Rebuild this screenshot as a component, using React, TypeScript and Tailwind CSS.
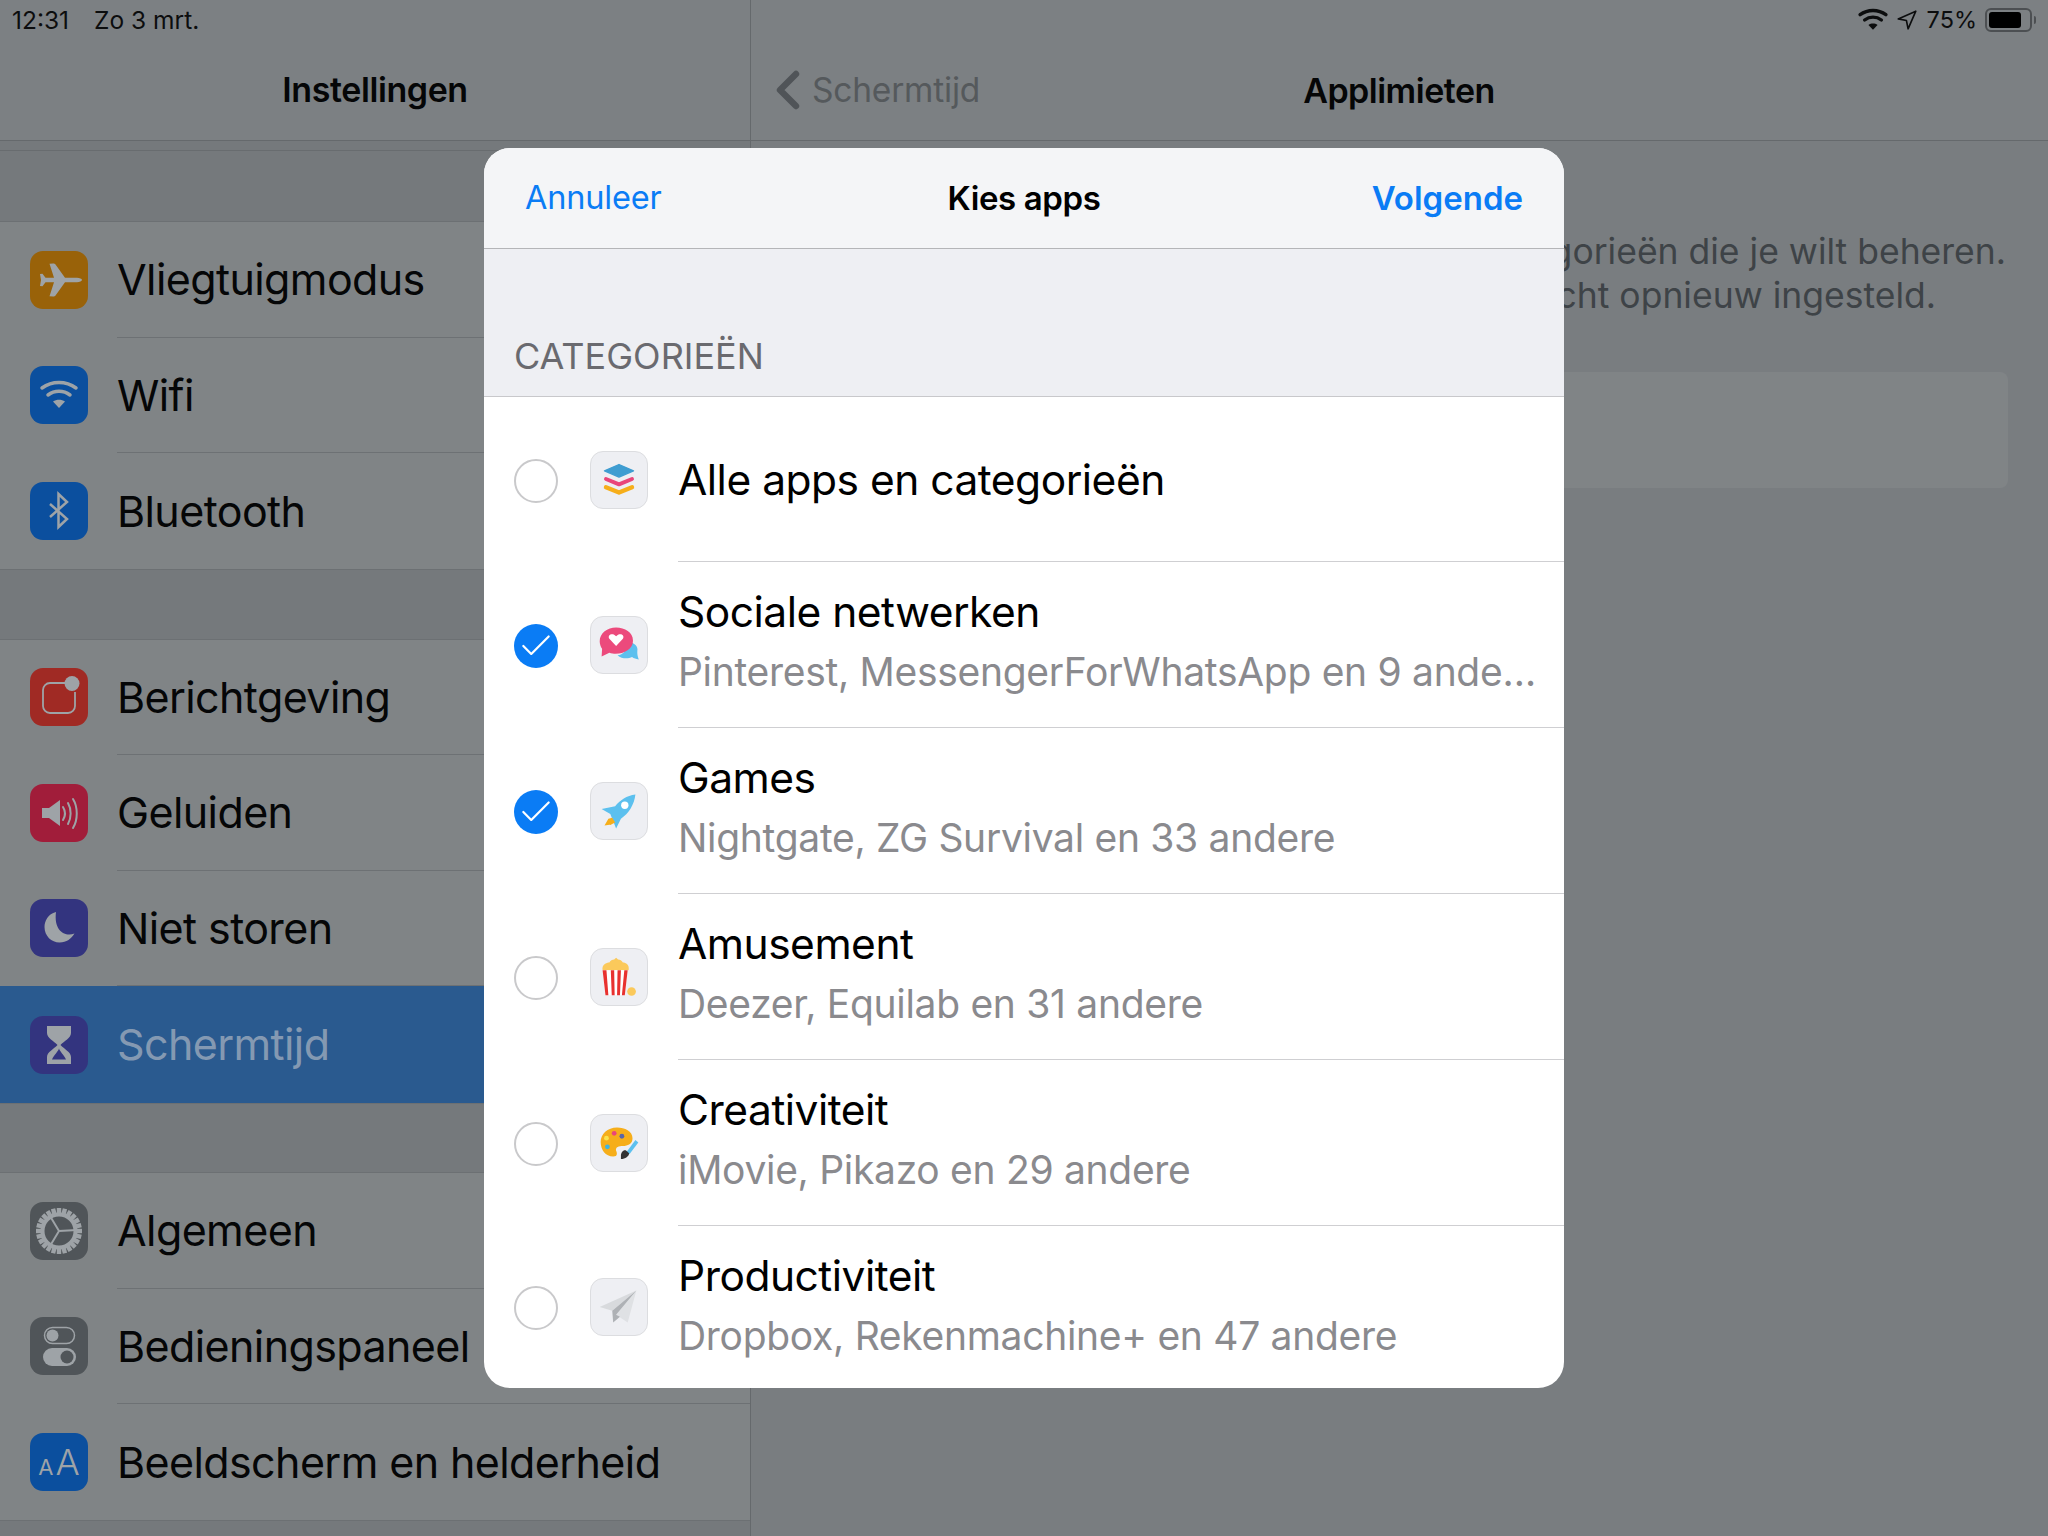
import type { ReactNode } from "react";
import { Check, ChevronLeft } from "lucide-react";

const dim = "#9ea3a7";

function Plane() {
  return (
    <svg viewBox="0 0 58 58" className="size-[58px]">
      <path
        fill={dim}
        d="M47 26.800c2.500 0 5 1 5 2.200s-2.500 2.200-5 2.200H35L25.500 44.500c-.5.700-1.300 1-2.500 1l-3.500-.2 4.500-14.100H15.500l-3 4-2.500-.2 1-6-1-6 2.500-.2 3 4H24L19.500 12.700l3.500-.2c1.200 0 2 .3 2.500 1L35 26.800z"
      />
    </svg>
  );
}

function Wifi({ color = dim, size = 58, weight = 3.5 }: { color?: string; size?: number; weight?: number }) {
  return (
    <svg viewBox="0 0 58 58" width={size} height={size}>
      <path d="M12 22c10-7.500 24-7.500 34 0" fill="none" stroke={color} strokeWidth={weight} strokeLinecap="round" />
      <path d="M18 29c6.500-5 15.500-5 22 0" fill="none" stroke={color} strokeWidth={weight} strokeLinecap="round" />
      <path d="M23 35.500c3.500-2.500 8.500-2.500 12 0L29 42z" fill={color} />
    </svg>
  );
}

function Bluetooth() {
  return (
    <svg viewBox="0 0 58 58" className="size-[58px]">
      <path d="M20 22l17 15-8.500 8V12l8.500 8-17 15" fill="none" stroke={dim} strokeWidth="2.500" />
    </svg>
  );
}

function Notifications() {
  return (
    <svg viewBox="0 0 58 58" className="size-[58px]">
      <path d="M36 15H20a7 7 0 0 0-7 7v16a7 7 0 0 0 7 7h18a7 7 0 0 0 7-7V24" fill="none" stroke={dim} strokeWidth="1.800" />
      <circle cx="42" cy="15.500" r="7.500" fill={dim} />
    </svg>
  );
}

function Sounds() {
  return (
    <svg viewBox="0 0 58 58" className="size-[58px]">
      <path d="M12 24h7l11-8v26l-11-8h-7z" fill={dim} />
      <path d="M33 23c2.500 4 2.500 9 0 13" fill="none" stroke={dim} strokeWidth="2" strokeLinecap="round" />
      <path d="M38 19c3.500 6 3.500 15 0 21" fill="none" stroke={dim} strokeWidth="2" strokeLinecap="round" />
      <path d="M43 15c5 8 5 21 0 29" fill="none" stroke={dim} strokeWidth="2" strokeLinecap="round" />
    </svg>
  );
}

function Moon() {
  return (
    <svg viewBox="0 0 58 58" className="size-[58px]">
      <path d="M26 13c-8 2-11.500 9-11.500 15 0 9 7 15.500 15 15.500 7 0 12-4 15-9-9 3.500-21-2-18.500-21.500z" fill={dim} />
    </svg>
  );
}

function Hourglass() {
  return (
    <svg viewBox="0 0 58 58" className="size-[58px]">
      <path
        fill={dim}
        fillRule="evenodd"
        d="M17 10h24v7c0 5-7 8-10.500 12C34 33 41 36 41 41v7H17v-7c0-5 7-8 10.500-12C24 25 17 22 17 17zm12 22.500c-.8 3-5 6.500-7 11h14c-2-4.500-6.200-8-7-11z"
      />
    </svg>
  );
}

function Gear() {
  const teeth = Array.from({ length: 24 }, (_, i) => i * 15);
  return (
    <svg viewBox="0 0 58 58" className="size-[58px]">
      {teeth.map((deg) => (
        <rect key={deg} x="26.800" y="6" width="4.400" height="6.500" fill={dim} transform={`rotate(${deg} 29 29)`} />
      ))}
      <circle cx="29" cy="29" r="16.500" fill="none" stroke={dim} strokeWidth="4" />
      <path d="M29 29l18-1M29 29l-9 15M29 29l-9-15" stroke={dim} strokeWidth="2" />
    </svg>
  );
}

function Toggles() {
  return (
    <svg viewBox="0 0 58 58" className="size-[58px]">
      <rect x="14.500" y="10.500" width="30" height="16" rx="8" fill="none" stroke={dim} strokeWidth="1.500" />
      <circle cx="22.500" cy="18.500" r="6" fill={dim} />
      <rect x="13" y="31" width="33" height="18" rx="9" fill={dim} />
      <circle cx="37" cy="40" r="6.500" fill="#505559" />
    </svg>
  );
}

function Stack() {
  return (
    <svg viewBox="0 0 58 58" className="size-full">
      <path d="M29 13l15 6.500L29 26l-15-6.500z" fill="#3f9dd1" stroke="#3f9dd1" strokeWidth="1.500" strokeLinejoin="round" />
      <path d="M15.500 28l13.500 5.500L42.500 28" fill="none" stroke="#e9467a" strokeWidth="4" strokeLinecap="round" strokeLinejoin="round" />
      <path d="M15.500 36.500l13.500 5.500 13.500-5.500" fill="none" stroke="#f6ae1a" strokeWidth="4.500" strokeLinecap="round" strokeLinejoin="round" />
    </svg>
  );
}

function Chat() {
  return (
    <svg viewBox="0 0 58 58" className="size-full">
      <path d="M39 25c6 2 10 5 9 10-.2 3 .2 6 1.500 9-3-.5-5-1-7-2.500-4 2-11 2-15-2 6 0 12-8 11.500-14.500z" fill="#5cc0ee" />
      <path d="M26 11c-9 0-17 6-17 14 0 3 1 5.500 2.500 8l-.5 8 8-4c2 .8 4.500 1 6.500 1 9 0 18-5 18-13.500S35 11 26 11z" fill="#ec4a7c" />
      <path d="M26 30l-7-7.500c-2.500-4 3.500-7 7-2.500 3.500-4.500 9.500-1.500 7 2.500z" fill="#fff" />
    </svg>
  );
}

function Rocket() {
  return (
    <svg viewBox="0 0 58 58" className="size-full">
      <path d="M46 12c-9 1-16 6-21 12l-14 3 9 5 6 15 5-10c8-5 14-15 15-25z" fill="#5cc0ee" />
      <circle cx="35" cy="23" r="3.800" fill="#fff" />
      <path d="M18 37l-4 7 7-1-2 1 6-3-3-5z" fill="#f6ae1a" />
    </svg>
  );
}

function Popcorn() {
  return (
    <svg viewBox="0 0 58 58" className="size-full">
      <path d="M12 22c-1-6 4-8 7-8 1-2 3-3 5-3l2-2 2 2c2 0 4 1 5 3 3 0 7 2 6 8z" fill="#fbc95b" />
      <path d="M12 22h26l-3 26H15z" fill="#fff" />
      <path d="M12 22h4l2 26h-3zM20.500 22h3.500l.5 26h-3zM27.500 22h3.500l-1 26h-3zM34.500 22h3.500l-3 26h-3z" fill="#e8312f" />
      <circle cx="42" cy="44" r="4.500" fill="#fbc95b" />
    </svg>
  );
}

function Palette() {
  return (
    <svg viewBox="0 0 58 58" className="size-full">
      <path d="M27 13c-10 0-17 7-17 15s5 15 13 15c5 0 4-4 3-6-1-4 3-5 7-5 5 0 10-2 10-8 0-7-8-11-16-11z" fill="#f6ae1a" />
      <circle cx="24" cy="19" r="2.500" fill="#e9467a" />
      <circle cx="32" cy="22" r="2.500" fill="#5a66a8" />
      <circle cx="16" cy="24" r="2.500" fill="#fbe34b" />
      <circle cx="17" cy="33" r="2.500" fill="#3fb4e0" />
      <path d="M37 38l9-12 3 2.500-9 12z" fill="#5cc0ee" />
      <path d="M31 42c0-3 2-6 5-5.500l3.500 3c0 3-4 6-8.500 6z" fill="#333" />
    </svg>
  );
}

function PaperPlane() {
  return (
    <svg viewBox="0 0 58 58" className="size-full">
      <path d="M47 12L9 29l13 4z" fill="#d8dadd" />
      <path d="M47 12L26 37l12 8z" fill="#dfe1e4" />
      <path d="M47 12L22 33l1 12 7-6-4-2z" fill="#aeb1b5" />
    </svg>
  );
}

const sidebarGroups = [
  [
    { label: "Vliegtuigmodus", bg: "bg-[#996209]", icon: <Plane /> },
    { label: "Wifi", bg: "bg-[#0b4f9e]", icon: <Wifi /> },
    { label: "Bluetooth", bg: "bg-[#0b4f9e]", icon: <Bluetooth /> },
  ],
  [
    { label: "Berichtgeving", bg: "bg-[#a02a24]", icon: <Notifications /> },
    { label: "Geluiden", bg: "bg-[#a11d3a]", icon: <Sounds /> },
    { label: "Niet storen", bg: "bg-[#33347f]", icon: <Moon /> },
    { label: "Schermtijd", bg: "bg-[#33347f]", icon: <Hourglass />, active: true },
  ],
  [
    { label: "Algemeen", bg: "bg-[#505559]", icon: <Gear /> },
    { label: "Bedieningspaneel", bg: "bg-[#505559]", icon: <Toggles /> },
    {
      label: "Beeldscherm en helderheid",
      bg: "bg-[#0b4f9e]",
      icon: (
        <span className="flex items-baseline leading-none text-[#9ea3a7]">
          <span className="text-[22px]">A</span>
          <span className="ml-[2px] text-[36px] font-light">A</span>
        </span>
      ),
    },
  ],
];

const categories: { title: string; sub?: string; icon: ReactNode; on?: boolean }[] = [
  { title: "Alle apps en categorieën", icon: <Stack /> },
  { title: "Sociale netwerken", sub: "Pinterest, MessengerForWhatsApp en 9 ande…", icon: <Chat />, on: true },
  { title: "Games", sub: "Nightgate, ZG Survival en 33 andere", icon: <Rocket />, on: true },
  { title: "Amusement", sub: "Deezer, Equilab en 31 andere", icon: <Popcorn /> },
  { title: "Creativiteit", sub: "iMovie, Pikazo en 29 andere", icon: <Palette /> },
  { title: "Productiviteit", sub: "Dropbox, Rekenmachine+ en 47 andere", icon: <PaperPlane /> },
];

function SidebarRow({ label, bg, icon, active, last }: { label: string; bg: string; icon: ReactNode; active?: boolean; last?: boolean }) {
  return (
    <div className={`flex items-center pl-[30px] ${active ? "h-[117px] bg-[#2a5a8f]" : "h-[115.5px]"}`}>
      <div className={`flex size-[58px] shrink-0 items-center justify-center rounded-[13px] ${bg}`}>{icon}</div>
      <div className={`ml-[29px] flex h-full min-w-0 flex-1 items-center whitespace-nowrap ${last || active ? "" : "border-b border-[#6d7174]"}`}>
        <span className={`text-[43px] tracking-[-0.6px] ${active ? "text-[#8499b2]" : "text-[#050607]"}`}>{label}</span>
      </div>
    </div>
  );
}

function CategoryRow({ title, sub, icon, on, last, first }: { title: string; sub?: string; icon: ReactNode; on?: boolean; last?: boolean; first?: boolean }) {
  return (
    <div className={`flex items-center pl-[30px] ${last ? "h-[162px]" : first ? "h-[165px]" : "h-[166px]"}`}>
      <div className={`mt-[2px] flex size-[44px] shrink-0 items-center justify-center rounded-full ${on ? "bg-[#0a7cf5]" : "border-2 border-[#c9c9cb]"}`}>
        {on && <Check size={38} strokeWidth={1.4} className="text-white" />}
      </div>
      <div className="ml-[32px] size-[58px] shrink-0 rounded-[13px] border border-[#dcdde0] bg-[#eeeff3]">{icon}</div>
      <div className={`ml-[30px] flex h-full min-w-0 flex-1 flex-col justify-center whitespace-nowrap ${last ? "pb-[5px]" : sub ? "border-b border-[#cfcfd2] pb-[8px]" : "border-b border-[#cfcfd2] pt-[2px]"}`}>
        <div className="text-[42.5px] leading-[54px] tracking-[-0.5px] text-black">{title}</div>
        {sub && <div className="mt-[8px] text-[39px] leading-[50px] tracking-[-0.3px] text-[#8a8a8e]">{sub}</div>}
      </div>
    </div>
  );
}

export default function App() {
  return (
    <div className="relative h-[1536px] w-[2048px] overflow-hidden bg-[#75797c] font-['Inter','Liberation_Sans',sans-serif]">
      <div className="flex h-full">
        {/* settings list */}
        <div className="h-full w-[751px] shrink-0 border-r border-[#65696c]">
          <div className="h-[141px] border-b border-[#65696c] bg-[#7c8083]">
            <div className="flex h-[40px] items-center gap-[25px] pl-[12px] text-[24.5px] text-[#0c0d0e]">
              <span>12:31</span>
              <span>Zo 3 mrt.</span>
            </div>
            <div className="pt-[24px] text-center text-[34px] font-semibold tracking-[-0.4px] text-[#050607]">Instellingen</div>
          </div>
          <div className="mt-[9px] h-[71px] border-t border-[#686c6f]" />
          {sidebarGroups.map((group, i) => (
            <div key={i}>
              <div className="border-y border-[#6c7073] bg-[#808486]">
                {group.map((row, j) => (
                  <SidebarRow key={row.label} {...row} last={j === group.length - 1} />
                ))}
              </div>
              <div className={i === 0 ? "h-[69px]" : i === 1 ? "h-[68px]" : ""} />
            </div>
          ))}
        </div>

        {/* app limits */}
        <div className="min-w-0 flex-1 bg-[#797d80]">
          <div className="h-[141px] border-b border-[#65696c] bg-[#7c8083]">
            <div className="flex h-[40px] items-center justify-end pr-[12px] text-[#0c0d0e]">
              <Wifi color="#0c0d0e" size={44} weight={4.5} />
              <svg viewBox="0 0 20 20" className="ml-[1px] size-[22px]">
                <path d="M18 2L2 9l7.500 1.500L11 18z" fill="none" stroke="#0c0d0e" strokeWidth="1.500" strokeLinejoin="round" />
              </svg>
              <span className="ml-[9px] text-[23.5px]">75%</span>
              <div className="ml-[8px] flex h-[24px] w-[47px] items-center rounded-[6px] border-2 border-[#4c4f52] p-[2px]">
                <div className="h-full w-[32px] rounded-[3px] bg-black" />
              </div>
              <div className="ml-[2px] h-[8px] w-[2px] rounded-r bg-[#4c4f52]" />
            </div>
            <div className="grid grid-cols-[1fr_auto_1fr] items-center pl-[5px] pt-[18px]">
              <div className="flex items-center">
                <ChevronLeft size={64} strokeWidth={2.4} className="text-[#505458]" />
                <span className="ml-[-8px] text-[33.5px] tracking-[-0.2px] text-[#55595c]">Schermtijd</span>
              </div>
              <span className="pr-[6px] text-[34px] font-semibold tracking-[-0.5px] text-[#050607]">Applimieten</span>
              <span />
            </div>
          </div>
          <div className="flex flex-col items-end pr-[42px] pt-[89px] text-[35.5px] leading-[44px] text-[#3e4347]">
            <div className="whitespace-nowrap">Stel tijdslimieten in voor app-categorieën die je wilt beheren.</div>
            <div className="mr-[70px] whitespace-nowrap">De limieten worden elke nacht opnieuw ingesteld.</div>
          </div>
          <div className="ml-[40px] mr-[40px] mt-[54px] h-[116px] rounded-[8px] bg-[#808486]" />
        </div>
      </div>

      {/* modal sheet */}
      <div className="absolute left-[484px] top-[148px] h-[1240px] w-[1080px] overflow-hidden rounded-[26px] bg-white">
        <div className="grid h-[101px] grid-cols-[1fr_auto_1fr] items-center border-b border-[#b4b5b8] bg-[#f4f5f7] px-[41px] pt-[1px] text-[33px]">
          <span className="text-[32.5px] tracking-[-0.2px] text-[#0a7cf5]">Annuleer</span>
          <span className="font-semibold tracking-[-0.4px] text-black">Kies apps</span>
          <span className="text-right font-semibold text-[#0a7cf5]">Volgende</span>
        </div>
        <div className="flex h-[148px] items-end border-b border-[#c8c8cb] bg-[#eeeff3] pb-[18px] pl-[30px] text-[36px] leading-[44px] text-[#6a6a6f]">
          CATEGORIEËN
        </div>
        {categories.map((c, i) => (
          <CategoryRow key={c.title} {...c} first={i === 0} last={i === categories.length - 1} />
        ))}
      </div>
    </div>
  );
}
